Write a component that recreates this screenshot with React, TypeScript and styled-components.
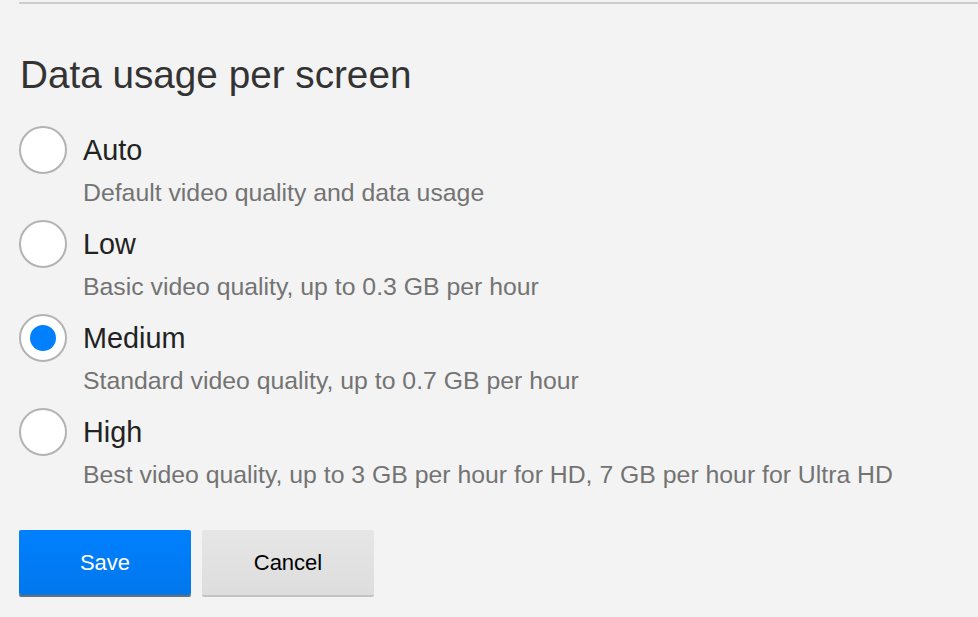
import React, { useState } from "react";
import styled, { createGlobalStyle } from "styled-components";

const Global = createGlobalStyle`
  html, body { margin: 0; padding: 0; background: #f3f3f3; }
  body { font-family: "Liberation Sans", Arial, sans-serif; }
`;

const Page = styled.div`
  width: 978px;
  height: 617px;
  overflow: hidden;
  background: #f3f3f3;
  padding: 2px 0 0 19px;
  box-sizing: border-box;
`;

const Section = styled.section`
  border-top: 2px solid #cccccc;
  padding-top: 47px;
`;

const Title = styled.h2`
  margin: 0 0 27px 1px;
  font-size: 38.7px;
  line-height: 48px;
  font-weight: 400;
  color: #333333;
`;

const Options = styled.div`
  display: flex;
  flex-direction: column;
`;

const Option = styled.label`
  display: grid;
  grid-template-columns: 48px 1fr;
  grid-template-rows: 48px auto;
  align-content: start;
  column-gap: 16px;
  height: 94px;
  cursor: pointer;
`;

const Radio = styled.span<{ $checked: boolean }>`
  width: 48px;
  height: 48px;
  box-sizing: border-box;
  border-radius: 50%;
  border: 2px solid #b3b3b3;
  background: #ffffff;
  display: flex;
  align-items: center;
  justify-content: center;
  &::after {
    content: "";
    width: 26px;
    height: 26px;
    border-radius: 50%;
    background: #0080ff;
    display: ${(p) => (p.$checked ? "block" : "none")};
  }
`;

const Label = styled.span`
  font-size: 28.8px;
  line-height: 48px;
  color: #222222;
`;

const Description = styled.span`
  grid-column: 2;
  margin-top: 4px;
  font-size: 24.8px;
  line-height: 30px;
  color: #737373;
  white-space: nowrap;
`;

const Actions = styled.div`
  display: flex;
  gap: 11px;
  margin-top: 28px;
`;

const Button = styled.button<{ $primary?: boolean }>`
  width: 172px;
  height: 65px;
  padding-top: 2px;
  border: none;
  border-radius: 2px;
  font-family: "Liberation Sans", Arial, sans-serif;
  font-size: 22px;
  cursor: pointer;
  color: ${(p) => (p.$primary ? "#ffffff" : "#000000")};
  background: ${(p) =>
    p.$primary
      ? "linear-gradient(to bottom, #0080ff, #0277ec)"
      : "linear-gradient(to bottom, #e6e6e6, #dddddd)"};
  box-shadow: ${(p) =>
    p.$primary ? "0 2px 0 rgba(0,0,0,0.55)" : "0 2px 0 rgba(0,0,0,0.2)"};
`;

const options = [
  { label: "Auto", desc: "Default video quality and data usage" },
  { label: "Low", desc: "Basic video quality, up to 0.3 GB per hour" },
  { label: "Medium", desc: "Standard video quality, up to 0.7 GB per hour" },
  {
    label: "High",
    desc: "Best video quality, up to 3 GB per hour for HD, 7 GB per hour for Ultra HD",
  },
];

export default function App() {
  const [selected, setSelected] = useState("Medium");
  return (
    <Page>
      <Global />
      <Section>
        <Title>Data usage per screen</Title>
        <Options>
          {options.map((o) => (
            <Option key={o.label} onClick={() => setSelected(o.label)}>
              <Radio $checked={selected === o.label} />
              <Label>{o.label}</Label>
              <Description>{o.desc}</Description>
            </Option>
          ))}
        </Options>
        <Actions>
          <Button $primary>Save</Button>
          <Button>Cancel</Button>
        </Actions>
      </Section>
    </Page>
  );
}
